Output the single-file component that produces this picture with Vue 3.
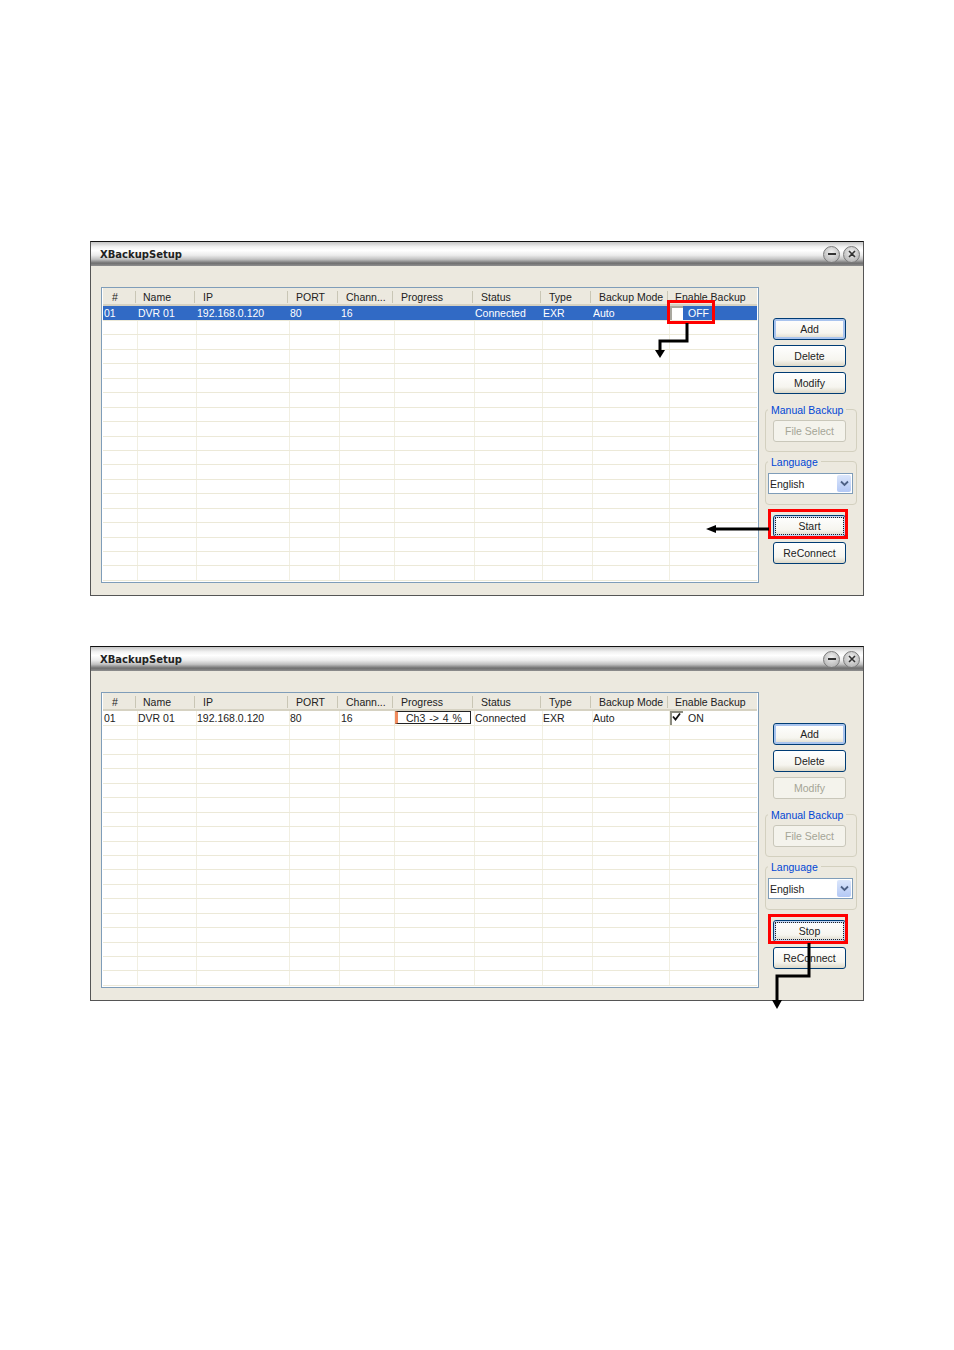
<script setup>
const columns = [
  { label: '#', cls: 'c-num' },
  { label: 'Name', cls: 'c-name' },
  { label: 'IP' },
  { label: 'PORT' },
  { label: 'Chann...' },
  { label: 'Progress' },
  { label: 'Status' },
  { label: 'Type' },
  { label: 'Backup Mode' },
  { label: 'Enable Backup', cls: 'c-name' }
]

const windows = [
  {
    id: 1,
    running: false,
    selected: true,
    action: 'Start',
    modifyDisabled: false,
    progress: '',
    enabled: 'OFF',
    marks: ['mark-off', 'mark-start'],
    arrows: [
      { line: 'M597 82V100H570V110', head: '565,109 575,109 570,117' },
      { line: 'M679 288H625', head: '626,284 626,292 616,288' }
    ]
  },
  {
    id: 2,
    running: true,
    selected: false,
    action: 'Stop',
    modifyDisabled: true,
    progress: 'Ch3 -> 4 %',
    enabled: 'ON',
    marks: ['mark-stop'],
    arrows: [
      { line: 'M719 297V330H687V355', head: '682,354 692,354 687,363' }
    ]
  }
]

const emptyRows = Array.from({ length: 18 }, (_, i) => i)
</script>

<template>
  <div class="page">
    <section v-for="win in windows" :key="win.id" class="window">
      <header class="titlebar">
        <h1>XBackupSetup</h1>
        <div class="title-buttons">
          <span class="round-btn">
            <svg width="10" height="10" viewBox="0 0 10 10"><path d="M1 5H9" stroke="#333" stroke-width="2" /></svg>
          </span>
          <span class="round-btn">
            <svg width="10" height="10" viewBox="0 0 10 10"><path d="M2 2L8 8M8 2L2 8" stroke="#333" stroke-width="1.6" /></svg>
          </span>
        </div>
      </header>

      <div class="content">
        <div class="list">
          <div class="list-head">
            <span v-for="col in columns" :key="col.label" class="head-cell" :class="col.cls">{{ col.label }}</span>
          </div>
          <div class="row first" :class="{ selected: win.selected }">
            <span class="cell pad">01</span>
            <span class="cell">DVR 01</span>
            <span class="cell">192.168.0.120</span>
            <span class="cell">80</span>
            <span class="cell pad">16</span>
            <span class="cell progress-cell">
              <span v-if="win.progress" class="progress">{{ win.progress }}</span>
            </span>
            <span class="cell">Connected</span>
            <span class="cell">EXR</span>
            <span class="cell">Auto</span>
            <span class="cell enable">
              <span class="check">
                <svg v-if="win.enabled === 'ON'" width="10" height="10" viewBox="0 0 10 10">
                  <path d="M1 3.5L3.5 6.5L8 0.5" fill="none" stroke="#111" stroke-width="1.8" />
                </svg>
              </span>
              <span class="enable-text">{{ win.enabled }}</span>
            </span>
          </div>
          <div v-for="r in emptyRows" :key="r" class="row">
            <span v-for="c in 10" :key="c" class="cell"></span>
          </div>
        </div>

        <aside class="side">
          <button class="btn default">Add</button>
          <button class="btn">Delete</button>
          <button class="btn" :disabled="win.modifyDisabled">Modify</button>

          <div class="group backup-group">
            <span class="legend">Manual Backup</span>
            <button class="btn" disabled>File Select</button>
          </div>

          <div class="group lang-group">
            <span class="legend">Language</span>
            <div class="select">
              <span>English</span>
              <span class="select-arrow">
                <svg width="9" height="7" viewBox="0 0 9 7"><path d="M1 1.5L4.5 5L8 1.5" fill="none" stroke="#4d6185" stroke-width="1.8" /></svg>
              </span>
            </div>
          </div>

          <button class="btn focused">{{ win.action }}</button>
          <button class="btn">ReConnect</button>
        </aside>
      </div>

      <!-- annotations over the screenshot -->
      <span v-for="mark in win.marks" :key="mark" class="mark" :class="mark"></span>
      <svg class="arrows" width="774" height="370" viewBox="0 0 774 370">
        <g v-for="(arrow, i) in win.arrows" :key="i">
          <path :d="arrow.line" fill="none" stroke="#000" stroke-width="3" />
          <polygon :points="arrow.head" fill="#000" />
        </g>
      </svg>
    </section>
  </div>
</template>

<style scoped>
.page {
  min-height: 1350px;
  box-sizing: border-box;
  padding: 241px 0 0 90px;
  background: #fff;
  font-family: "Liberation Sans", Arial, sans-serif;
  font-size: 10.5px;
  color: #222;
}

.window {
  position: relative;
  width: 774px;
  height: 355px;
  box-sizing: border-box;
  margin-bottom: 50px;
  background: #ece9df;
  border: 1px solid #555;
  border-top-color: #111;
}

.titlebar {
  display: flex;
  align-items: center;
  justify-content: space-between;
  height: 24px;
  padding: 0 3px 0 9px;
  background: linear-gradient(#c4c4c4 0, #f2f2f2 20%, #fff 35%, #ececec 55%, #c2c2c2 72%, #6f6f6f 88%, #8f8f8f 100%);
}

.titlebar h1 {
  margin: 0;
  font-family: "DejaVu Sans", sans-serif;
  font-size: 10px;
  font-weight: bold;
  color: #222;
}

.title-buttons {
  display: flex;
  gap: 3px;
}

.round-btn {
  display: flex;
  align-items: center;
  justify-content: center;
  width: 17px;
  height: 17px;
  box-sizing: border-box;
  border: 1px solid #7a7a7a;
  border-radius: 50%;
  background: radial-gradient(circle at 50% 35%, #f0f0f0, #a8a8a8);
}

.content {
  display: flex;
  align-items: flex-start;
  padding: 21px 6px 0 10px;
}

.list {
  width: 658px;
  height: 296px;
  box-sizing: border-box;
  padding: 0 1px;
  background: #fff;
  border: 1px solid #7f9db9;
  overflow: hidden;
}

.list-head {
  display: grid;
  grid-template-columns: 32px 59px 93px 50px 55px 80px 68px 50px 77px 1fr;
  height: 18px;
  box-sizing: border-box;
  background: #ece9df;
  border-bottom: 2px solid #d6d2c2;
}

.head-cell {
  height: 12px;
  margin-top: 3px;
  padding-left: 8px;
  line-height: 13px;
  white-space: nowrap;
  border-left: 1px solid #c9c6b5;
}

.head-cell:first-child {
  border-left: 0;
}

.c-num {
  padding-left: 9px;
}

.c-name {
  padding-left: 7px;
}

.row {
  display: grid;
  grid-template-columns: 35px 59px 93px 50px 55px 80px 68px 50px 77px 1fr;
  height: 14.45px;
  box-sizing: border-box;
  border-bottom: 1px solid #ece9d8;
}

.row.first {
  height: 15px;
}

.row.selected {
  background: #316ac5;
  color: #fff;
}

.cell {
  line-height: 14px;
  white-space: nowrap;
  border-right: 1px solid #f1efe2;
  overflow: hidden;
}

.row.selected .cell {
  border-right-color: #316ac5;
}

.cell:last-child {
  border-right: 0;
}

.cell.pad {
  padding-left: 1px;
}

.cell.pad + .cell {
  padding-left: 0;
}

.progress-cell {
  padding: 0 0 0 1px;
}

.progress {
  display: block;
  width: 76px;
  height: 13px;
  box-sizing: border-box;
  padding-left: 8px;
  line-height: 12px;
  word-spacing: 1px;
  border: 1px solid #222;
  border-left: 3px solid #f08a5d;
  box-shadow: -1px 0 0 #222;
}

.enable {
  display: flex;
}

.check {
  width: 13px;
  height: 14px;
  box-sizing: border-box;
  background: #fff;
  border-top: 2px solid #8c8c80;
  border-left: 2px solid #8c8c80;
  display: flex;
  align-items: flex-start;
}

.row.selected .check {
  border-top-color: #a9a89f;
  border-left-color: #a9a89f;
}

.enable-text {
  padding-left: 5px;
}

.side {
  display: flex;
  flex-direction: column;
  align-items: flex-start;
  width: 92px;
  margin-left: 6px;
  padding-top: 31px;
}

.btn {
  display: block;
  width: 73px;
  height: 22px;
  margin: 0 0 5px 8px;
  padding: 0;
  box-sizing: border-box;
  font: inherit;
  color: #222;
  background: linear-gradient(#fff, #f6f5ef 70%, #dcd8c8);
  border: 1px solid #003c74;
  border-radius: 3px;
}

.btn:disabled {
  color: #a5a596;
  background: #f4f3ec;
  border-color: #c9c7ba;
}

.btn.default {
  box-shadow: inset 0 0 0 2px #a9c4ee;
}

.btn.focused {
  outline: 1px dotted #222;
  outline-offset: -3px;
  box-shadow: inset 0 0 0 2px #c3d5f2;
}

.group {
  position: relative;
  width: 92px;
  box-sizing: border-box;
  border: 1px solid #d3d0bf;
  border-radius: 4px;
}

.group .btn {
  margin: 0 0 0 7px;
}

.backup-group {
  height: 43px;
  margin-top: 10px;
  padding-top: 10px;
}

.lang-group {
  height: 44px;
  margin-top: 9px;
  padding-top: 11px;
}

.legend {
  position: absolute;
  top: -6px;
  left: 2px;
  padding: 0 3px 0 3px;
  line-height: 13px;
  color: #0046d5;
  background: #ece9df;
  white-space: nowrap;
}

.select {
  display: flex;
  align-items: center;
  justify-content: space-between;
  width: 85px;
  height: 21px;
  margin-left: 2px;
  box-sizing: border-box;
  padding: 1px;
  background: #fff;
  border: 1px solid #7f9db9;
}

.select-arrow {
  display: flex;
  align-items: center;
  justify-content: center;
  width: 14px;
  height: 17px;
  background: linear-gradient(#dbe6fb, #b3c8f5);
  border-radius: 2px;
}

.lang-group + .btn {
  margin-top: 10px;
}

.mark {
  position: absolute;
  box-sizing: border-box;
  border: 3px solid #f00;
}

.mark-off {
  left: 576px;
  top: 58px;
  width: 48px;
  height: 24px;
}

.mark-start,
.mark-stop {
  left: 677px;
  top: 267px;
  width: 80px;
  height: 30px;
}

.arrows {
  position: absolute;
  left: -1px;
  top: -1px;
  overflow: visible;
  pointer-events: none;
}
</style>

<style>
html, body {
  background: #fff;
}
</style>
